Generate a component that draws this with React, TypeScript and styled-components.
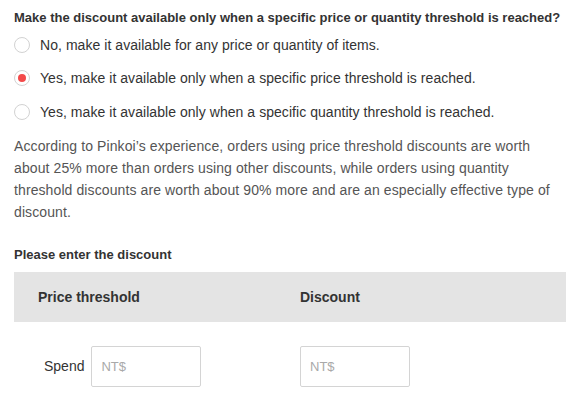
import React, { useState } from "react";
import styled, { createGlobalStyle } from "styled-components";

const Global = createGlobalStyle`
  html, body { margin: 0; padding: 0; background: #fff; }
  body { font-family: "Liberation Sans", Arial, Helvetica, sans-serif; }
  * { box-sizing: border-box; }
`;

const Page = styled.div`
  width: 566px;
  padding: 9px 0 0 14px;
  color: #333;
`;

const Title = styled.div`
  font-size: 13px;
  font-weight: bold;
  line-height: 18px;
  color: #333;
`;

const RadioList = styled.div`
  margin-top: 1px;
  display: flex;
  flex-direction: column;
`;

const Option = styled.label`
  height: 33.5px;
  display: flex;
  align-items: center;
  gap: 10px;
  font-size: 14px;
  letter-spacing: 0.05px;
  color: #333;
  cursor: pointer;
`;

const Circle = styled.span<{ $checked: boolean }>`
  width: 16px;
  height: 16px;
  border-radius: 50%;
  border: 1px solid #d2d2d2;
  background: #fff;
  display: flex;
  align-items: center;
  justify-content: center;
  flex: none;
  &::after {
    content: "";
    width: 8px;
    height: 8px;
    border-radius: 50%;
    background: ${(p) => (p.$checked ? "#f34a4a" : "transparent")};
  }
`;

const Para = styled.p`
  margin: 6px 0 0;
  font-size: 14px;
  line-height: 22px;
  letter-spacing: 0.1px;
  color: #555;
  width: 552px;
`;

const SubTitle = styled(Title)`
  margin-top: 23px;
`;

const Table = styled.div`
  margin-top: 8px;
  width: 552px;
`;

const HeadRow = styled.div`
  display: grid;
  grid-template-columns: 262px 1fr;
  height: 50px;
  background: #e4e4e4;
  align-items: center;
`;

const HeadCell = styled.div`
  padding-left: 24px;
  font-size: 14px;
  font-weight: bold;
  color: #333;
`;

const BodyRow = styled.div`
  display: grid;
  grid-template-columns: 262px 1fr;
  margin-top: 24px;
  align-items: center;
`;

const BodyCell = styled.div<{ $pad: number }>`
  padding-left: ${(p) => p.$pad}px;
  display: flex;
  align-items: center;
  gap: 7px;
  font-size: 14px;
  color: #333;
`;

const Input = styled.input`
  width: 110px;
  height: 41px;
  border: 1px solid #d4d4d4;
  border-radius: 2px;
  padding: 0 9px;
  font-family: "Liberation Sans", Arial, sans-serif;
  font-size: 13px;
  color: #333;
  outline: none;
  &::placeholder { color: #a9a9a9; }
`;

const options = [
  "No, make it available for any price or quantity of items.",
  "Yes, make it available only when a specific price threshold is reached.",
  "Yes, make it available only when a specific quantity threshold is reached.",
];

export default function App() {
  const [sel, setSel] = useState(1);
  return (
    <Page>
      <Global />
      <Title>Make the discount available only when a specific price or quantity threshold is reached?</Title>
      <RadioList>
        {options.map((o, i) => (
          <Option key={i} onClick={() => setSel(i)}>
            <Circle $checked={sel === i} />
            {o}
          </Option>
        ))}
      </RadioList>
      <Para>
        According to Pinkoi’s experience, orders using price threshold discounts are worth about 25% more than orders using other discounts, while orders using quantity threshold discounts are worth about 90% more and are an especially effective type of discount.
      </Para>
      <SubTitle>Please enter the discount</SubTitle>
      <Table>
        <HeadRow>
          <HeadCell>Price threshold</HeadCell>
          <HeadCell>Discount</HeadCell>
        </HeadRow>
        <BodyRow>
          <BodyCell $pad={30}>
            Spend <Input placeholder="NT$" />
          </BodyCell>
          <BodyCell $pad={24}>
            <Input placeholder="NT$" />
          </BodyCell>
        </BodyRow>
      </Table>
    </Page>
  );
}
